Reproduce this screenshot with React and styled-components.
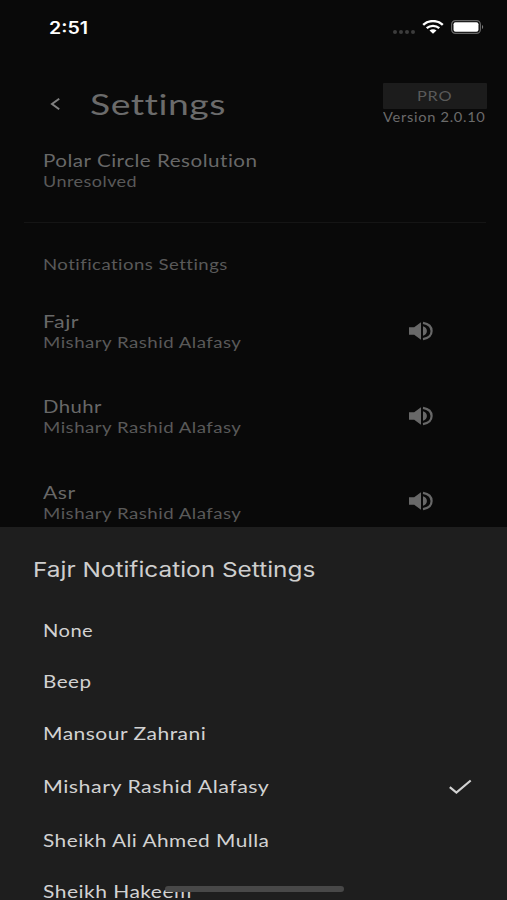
import React, { useState } from "react";
import styled, { createGlobalStyle } from "styled-components";

const GlobalStyle = createGlobalStyle`
  * {
    box-sizing: border-box;
  }

  body {
    margin: 0;
    background: #090909;
    font-family: Lato, "Open Sans", sans-serif;
  }
`;

const Screen = styled.div`
  width: 507px;
  height: 900px;
  display: flex;
  flex-direction: column;
  position: relative;
  overflow: hidden;
  background: #090909;
`;

// wide lettering, every label grows from its left edge
const Label = styled.span`
  display: block;
  width: max-content;
  white-space: nowrap;
  transform-origin: 0 50%;
  transform: scaleX(${({ $stretch }) => $stretch || 1.15});
  letter-spacing: ${({ $spacing = 0.4 }) => $spacing}px;
`;

/* STATUS BAR */

const StatusBar = styled.div`
  height: 54px;
  display: flex;
  justify-content: space-between;
  padding: 18px 23px 0 48.5px;
`;

const Time = styled(Label)`
  height: 20px;
  line-height: 20px;
  font-family: Inter, sans-serif;
  font-size: 17px;
  font-weight: 600;
  color: #fff;
`;

const StatusIcons = styled.div`
  height: 18px;
  display: flex;
  align-items: center;
`;

const Dots = styled.div`
  display: flex;
  gap: 2px;
  margin: 9px 7px 0 0;

  i {
    width: 4px;
    height: 4px;
    border-radius: 50%;
    background: #3c3c3c;
  }
`;

const Battery = styled.svg`
  margin-left: 7px;
`;

/* HEADER */

const Header = styled.header`
  height: 96px;
  display: flex;
  padding: 29px 20px 0 48px;
`;

const BackButton = styled.button`
  width: 42px;
  height: 42px;
  padding: 0;
  border: 0;
  background: none;
  display: flex;
  align-items: center;
  cursor: pointer;
`;

const Title = styled(Label)`
  height: 42px;
  line-height: 42px;
  font-size: 29.5px;
  color: #6b6b6b;
`;

const Badge = styled.div`
  width: 104px;
  margin-left: auto;
`;

const ProButton = styled.div`
  height: 26px;
  display: flex;
  padding-left: 34px;
  line-height: 26px;
  font-size: 13px;
  color: #5a5a5a;
  background: #1c1c1c;
  border-radius: 1px;
`;

const Version = styled(Label)`
  line-height: 18px;
  font-size: 12.5px;
  color: #6b6b6b;
`;

/* SETTINGS LIST */

const Setting = styled.div`
  height: ${({ $height }) => $height || 85.3}px;
  flex-shrink: 0;
  display: flex;
  justify-content: space-between;
  padding: 0 74px 0 43px;
`;

const Name = styled(Label)`
  line-height: 21px;
  font-size: 17.5px;
  color: #686868;
`;

const Value = styled(Label)`
  line-height: 20px;
  font-size: 15.5px;
  color: #595959;
`;

const Divider = styled.div`
  height: 1px;
  margin: 0 21px 0 24px;
  background: #151515;
`;

const SectionTitle = styled(Value)`
  margin: 31px 0 37px 43px;
`;

const Speaker = styled.svg`
  margin-top: 9.5px;
`;

/* BOTTOM SHEET */

const Sheet = styled.section`
  position: absolute;
  left: 0;
  right: 0;
  bottom: 0;
  height: 373px;
  overflow: hidden;
  padding-top: 28px;
  background: #1e1e1e;
`;

const SheetTitle = styled(Label)`
  margin: 0 0 19.5px 32.5px;
  line-height: 30px;
  font-family: Inter, sans-serif;
  font-size: 20.5px;
  color: #cecece;
`;

const Option = styled.div`
  height: ${({ $selected }) => ($selected ? 55 : 51.6)}px;
  display: flex;
  align-items: center;
  justify-content: space-between;
  padding: 0 35px 0 43px;
  font-size: 17.5px;
  color: #d2d2d2;
  cursor: pointer;
`;

const HomeIndicator = styled.div`
  position: absolute;
  left: 165px;
  bottom: 8px;
  width: 179px;
  height: 6px;
  border-radius: 3px;
  background: #484848;
`;

const prayers = [
  { name: "Fajr", stretch: 1.22 },
  { name: "Dhuhr", stretch: 1.16 },
  { name: "Asr", stretch: 1.21 },
];

const sounds = [
  { name: "None", stretch: 1.15 },
  { name: "Beep", stretch: 1.18 },
  { name: "Mansour Zahrani", stretch: 1.2 },
  { name: "Mishary Rashid Alafasy", stretch: 1.223 },
  { name: "Sheikh Ali Ahmed Mulla", stretch: 1.19 },
  { name: "Sheikh Hakeem", stretch: 1.2 },
];

function SpeakerIcon() {
  return (
    <Speaker width="24" height="20" viewBox="0 0 24 20" fill="#686868">
      <path d="M0 6.300h5.200L12 1.200v17.600L5.200 13.700H0z" />
      <path d="M14 5.200c2.500.8 3.900 2.500 3.900 4.800s-1.400 4-3.900 4.800z" />
      <path
        d="M14 1.900c5.200.9 8.600 4 8.600 8.100s-3.400 7.200-8.600 8.100"
        fill="none"
        stroke="#686868"
        strokeWidth="2.200"
      />
    </Speaker>
  );
}

function App() {
  const [sound, setSound] = useState("Mishary Rashid Alafasy");

  return (
    <>
      <GlobalStyle />
      <Screen>
        <StatusBar>
          <Time $spacing={0}>2:51</Time>
          <StatusIcons>
            <Dots>
              <i />
              <i />
              <i />
              <i />
            </Dots>
            <svg width="22" height="14" viewBox="0 0 22 14" fill="none">
              <path
                d="M1.200 4.900C6.600-.2 15.400-.2 20.800 4.900"
                stroke="#fff"
                strokeWidth="2.400"
              />
              <path
                d="M4.700 8.100c3.500-3.100 9.100-3.100 12.600 0"
                stroke="#fff"
                strokeWidth="2.300"
              />
              <path d="M7.500 10.500c2-1.700 5-1.700 7 0L11 13.700z" fill="#fff" />
            </svg>
            <Battery width="33" height="14" viewBox="0 0 33 14">
              <rect
                x=".6"
                y=".6"
                width="28.800"
                height="12.800"
                rx="3.800"
                fill="none"
                stroke="#666"
                strokeWidth="1.200"
              />
              <rect x="2.500" y="2.200" width="25" height="9.600" rx="2" fill="#fff" />
              <path d="M31 5c1.600.7 1.600 3.300 0 4z" fill="#777" />
            </Battery>
          </StatusIcons>
        </StatusBar>

        <Header>
          <BackButton aria-label="Back">
            <svg width="14" height="14" viewBox="0 0 14 14" fill="none">
              <path d="M11.200 1.700L4 7l7.200 5.300" stroke="#808080" strokeWidth="2" />
            </svg>
          </BackButton>
          <Title $stretch={1.265}>Settings</Title>
          <Badge>
            <ProButton>
              <Label $stretch={1.26} $spacing={0.6}>
                PRO
              </Label>
            </ProButton>
            <Version $stretch={1.17} $spacing={0.6}>
              Version 2.0.10
            </Version>
          </Badge>
        </Header>

        <Setting $height={72}>
          <div>
            <Name $stretch={1.18}>Polar Circle Resolution</Name>
            <Value $stretch={1.16}>Unresolved</Value>
          </div>
        </Setting>
        <Divider />
        <SectionTitle $stretch={1.195}>Notifications Settings</SectionTitle>
        {prayers.map(({ name, stretch }) => (
          <Setting key={name}>
            <div>
              <Name $stretch={stretch}>{name}</Name>
              <Value $stretch={1.203}>Mishary Rashid Alafasy</Value>
            </div>
            <SpeakerIcon />
          </Setting>
        ))}

        <Sheet>
          <SheetTitle $stretch={1.19} $spacing={0}>
            Fajr Notification Settings
          </SheetTitle>
          {sounds.map(({ name, stretch }) => (
            <Option
              key={name}
              $selected={name === sound}
              onClick={() => setSound(name)}
            >
              <Label $stretch={stretch}>{name}</Label>
              {name === sound && (
                <svg width="24" height="16" viewBox="0 0 24 16" fill="none">
                  <path
                    d="M1.800 8.200l6.600 5.300L22.700 1.500"
                    stroke="#d2d2d2"
                    strokeWidth="2.200"
                  />
                </svg>
              )}
            </Option>
          ))}
        </Sheet>
        <HomeIndicator />
      </Screen>
    </>
  );
}

export default App;
